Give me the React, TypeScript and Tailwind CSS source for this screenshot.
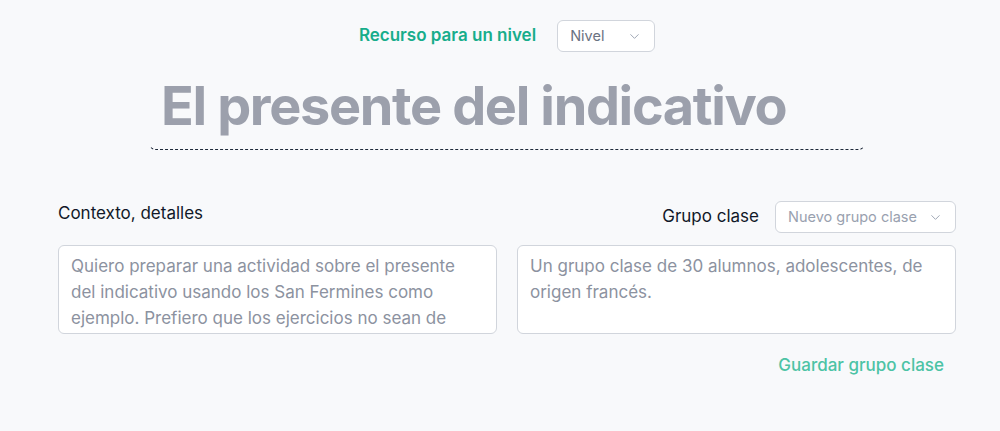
import { ChevronDown } from 'lucide-react'

function Select({ label, className }: { label: string; className?: string }) {
  return (
    <button
      type="button"
      className={
        'h-8 rounded-md border border-gray-300 bg-white pl-3 pr-3 flex items-center justify-between text-[14.5px] text-gray-400 ' +
        (className ?? '')
      }
    >
      <span>{label}</span>
      <ChevronDown size={15} strokeWidth={1.5} className="text-gray-400" />
    </button>
  )
}

export default function App() {
  return (
    <div className="min-h-[431px] w-full bg-[#f8f9fb] font-['Inter',sans-serif]">
      <div className="ml-[58px] w-[898px] pt-5">
        {/* Level */}
        <div className="flex items-center justify-center gap-[21px]">
          <span className="text-[17px] font-semibold text-[#17ad8b]">Recurso para un nivel</span>
          <Select label="Nivel" className="w-[98px] text-gray-500" />
        </div>

        {/* Title */}
        <div className="mt-[13px] mx-auto w-[718px] h-[85px] rounded-lg border border-dashed border-x-transparent border-t-transparent border-b-gray-800 flex items-center px-3">
          <h1 className="text-[54px] leading-none font-bold tracking-[-0.025em] text-[#9ca0ac] -mt-1">
            El presente del indicativo
          </h1>
        </div>

        {/* Context + group */}
        <div className="mt-[51px] grid grid-cols-2 gap-x-5">
          <div className="flex flex-col">
            <div className="h-8 flex items-start">
              <span className="text-[17px] leading-6 text-gray-900">Contexto, detalles</span>
            </div>
            <div className="mt-3 h-[89px] overflow-hidden rounded-md border border-gray-300 bg-white px-3 pt-[7px] text-[17px] leading-[26px] text-[#8c92a0]">
              Quiero preparar una actividad sobre el presente
              <br />
              del indicativo usando los San Fermines como
              <br />
              ejemplo. Prefiero que los ejercicios no sean de
            </div>
          </div>
          <div className="flex flex-col">
            <div className="h-8 flex items-center justify-end gap-4">
              <span className="text-[17px] text-gray-900">Grupo clase</span>
              <Select label="Nuevo grupo clase" className="w-[181px]" />
            </div>
            <div className="mt-3 h-[89px] rounded-md border border-gray-300 bg-white px-3 pt-[7px] text-[17px] leading-[26px] text-[#8c92a0]">
              Un grupo clase de 30 alumnos, adolescentes, de
              <br />
              origen francés.
            </div>
            <div className="mt-[19px] flex justify-end pr-3">
              <button type="button" className="text-[17px] font-medium text-[#4cc3a5]">
                Guardar grupo clase
              </button>
            </div>
          </div>
        </div>
      </div>
    </div>
  )
}
